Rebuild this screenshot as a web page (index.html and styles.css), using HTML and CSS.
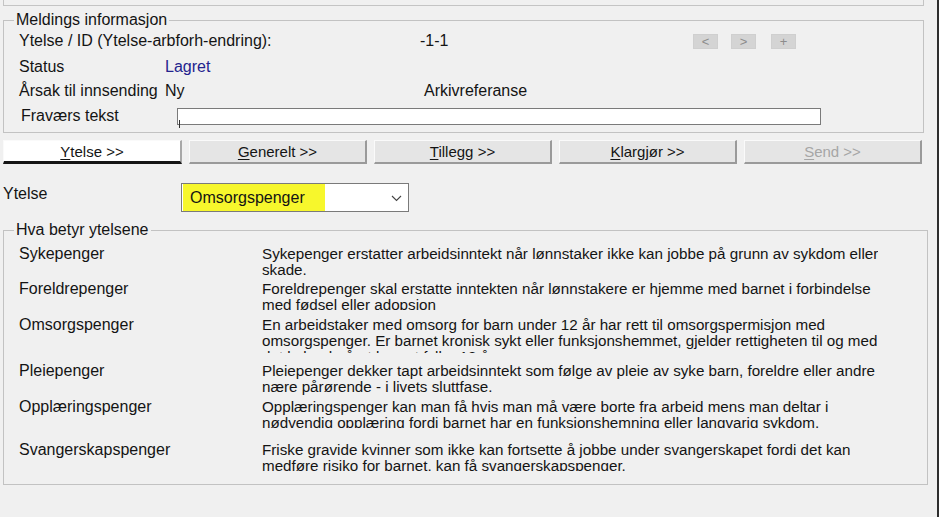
FILE: index.html
```html
<!DOCTYPE html>
<html lang="no">
<head>
<meta charset="utf-8">
<title>Ytelse</title>
<link rel="stylesheet" href="styles.css">
</head>
<body>
<div class="app">
  <div class="topbox"></div>

  <fieldset class="group info">
    <legend>Meldings informasjon</legend>
    <div class="irow r1">
      <span class="c-id">Ytelse / ID (Ytelse-arbforh-endring):</span>
      <span class="c-idval">-1-1</span>
      <span class="nav">
        <span class="navbtn">&lt;</span>
        <span class="navbtn nb2">&gt;</span>
        <span class="navbtn nb3">+</span>
      </span>
    </div>
    <div class="irow r2">
      <span class="c-lbl">Status</span>
      <span class="c-blue">Lagret</span>
    </div>
    <div class="irow">
      <span class="c-lbl">Årsak til innsending</span>
      <span class="c-ny">Ny</span>
      <span>Arkivreferanse</span>
    </div>
    <div class="irow r4">
      <span class="c-lbl2">Fraværs tekst</span>
      <span class="textbox"></span>
    </div>
  </fieldset>

  <div class="tabs">
    <div class="tab active"><u>Y</u>telse &gt;&gt;</div>
    <div class="tab"><u>G</u>enerelt &gt;&gt;</div>
    <div class="tab"><u>T</u>illegg &gt;&gt;</div>
    <div class="tab"><u>K</u>largjør &gt;&gt;</div>
    <div class="tab disabled"><u>S</u>end &gt;&gt;</div>
  </div>

  <div class="selrow">
    <span class="sellbl">Ytelse</span>
    <div class="select">
      <span class="hl">Omsorgspenger</span>
      <svg class="chev" width="11" height="7" viewBox="0 0 11 7"><polyline points="1,1 5.5,5.5 10,1" fill="none" stroke="#444" stroke-width="1.1"/></svg>
    </div>
  </div>

  <fieldset class="group expl">
    <legend>Hva betyr ytelsene</legend>
    <div class="item i1">
      <span class="name">Sykepenger</span>
      <div class="desc">Sykepenger erstatter arbeidsinntekt når lønnstaker ikke kan jobbe på grunn av sykdom eller<br>skade.</div>
    </div>
    <div class="item i2">
      <span class="name">Foreldrepenger</span>
      <div class="desc clip">Foreldrepenger skal erstatte inntekten når lønnstakere er hjemme med barnet i forbindelse<br>med fødsel eller adopsjon</div>
    </div>
    <div class="item i3">
      <span class="name">Omsorgspenger</span>
      <div class="desc cut3">En arbeidstaker med omsorg for barn under 12 år har rett til omsorgspermisjon med<br>omsorgspenger. Er barnet kronisk sykt eller funksjonshemmet, gjelder rettigheten til og med<br>det kalenderåret barnet fyller 18 år.</div>
    </div>
    <div class="item i4">
      <span class="name">Pleiepenger</span>
      <div class="desc">Pleiepenger dekker tapt arbeidsinntekt som følge av pleie av syke barn, foreldre eller andre<br>nære pårørende - i livets sluttfase.</div>
    </div>
    <div class="item i5">
      <span class="name">Opplæringspenger</span>
      <div class="desc clip">Opplæringspenger kan man få hvis man må være borte fra arbeid mens man deltar i<br>nødvendig opplæring fordi barnet har en funksjonshemning eller langvarig sykdom.</div>
    </div>
    <div class="item i6">
      <span class="name">Svangerskapspenger</span>
      <div class="desc clip">Friske gravide kvinner som ikke kan fortsette å jobbe under svangerskapet fordi det kan<br>medføre risiko for barnet, kan få svangerskapspenger.</div>
    </div>
  </fieldset>
</div>
</body>
</html>
```
FILE: styles.css
```css
* { box-sizing: border-box; }
html, body { margin: 0; padding: 0; background: #ffffff; }
body {
  font-family: "Liberation Sans", Arial, sans-serif;
  font-size: 16px;
  color: #141414;
}
.app {
  width: 939px;
  height: 517px;
  background: #f0f0f0;
  border-right: 2px solid #2e2e2e;
  padding-left: 3px;
  overflow: hidden;
}
.topbox {
  width: 921px;
  height: 6px;
  border: 1px solid #c4c4c4;
  border-top: 0;
}
.group {
  margin: 0;
  padding: 0 0 0 15px;
  border: 1px solid #c2c2c2;
  min-width: 0;
}
.group legend {
  padding: 0 2px;
  margin-left: -5px;
  line-height: 16px;
}
.info {
  width: 921px;
  margin-top: 6px;
  padding-top: 1px;
  padding-bottom: 4px;
}
.irow {
  display: flex;
  align-items: center;
  height: 24px;
  white-space: nowrap;
}
.irow.r2 { margin-top: 2px; }
.irow.r4 { margin-top: 1px; }
.c-id { width: 401px; }
.c-idval { width: 273px; }
.nav { display: flex; }
.navbtn {
  width: 25px;
  height: 15px;
  background: #d4d4d4;
  border: 1px solid #cfcfcf;
  color: #8c8c8c;
  font-size: 13px;
  line-height: 13px;
  text-align: center;
}
.nb2 { margin-left: 13px; }
.nb3 { margin-left: 15px; }
.c-lbl { width: 146px; }
.c-blue { color: #23238e; }
.c-ny { width: 259px; }
.c-lbl2 { width: 156px; margin-left: 2px; }
.textbox {
  position: relative;
  width: 644px;
  height: 17px;
  background: #ffffff;
  border: 1px solid #7a7a7a;
}
.textbox::after {
  content: "";
  position: absolute;
  left: 1px;
  top: 11px;
  width: 1px;
  height: 8px;
  background: #333;
}
.tabs {
  display: flex;
  gap: 7px;
  margin-top: 7px;
  width: 919px;
  font-size: 15px;
}
.tab {
  width: 178px;
  height: 24px;
  line-height: 21px;
  text-align: center;
  background: #e5e5e5;
  border-top: 1px solid #fafafa;
  border-left: 1px solid #fafafa;
  border-right: 2px solid #9a9a9a;
  border-bottom: 2px solid #9a9a9a;
}
.tab.active {
  width: 179px;
  background: #ffffff;
  border-bottom: 3px solid #151515;
  border-right: 2px solid #a8a8a8;
}
.tab.disabled { color: #a6a6a6; }
.tab u { text-underline-offset: 2px; }
.selrow {
  display: flex;
  margin-top: 19px;
  height: 28px;
}
.sellbl {
  width: 178px;
  padding-top: 2px;
}
.select {
  display: flex;
  align-items: center;
  justify-content: space-between;
  width: 228px;
  height: 29px;
  background: #ffffff;
  border: 1px solid #7a7a7a;
  padding: 0 6px 0 1px;
}
.hl {
  background: #f7f72c;
  padding: 5px 20px 5px 7px;
  line-height: 17px;
}
.chev { margin-top: 2px; }
.expl {
  width: 925px;
  margin-top: 11px;
  padding-top: 8px;
  padding-bottom: 13px;
}
.item {
  display: flex;
  white-space: nowrap;
  line-height: 16px;
}
.name { width: 243px; }
.desc {
  height: 32px;
  overflow: hidden;
  font-size: 15.2px;
}
.desc.clip { height: 29px; }
.desc.cut3 { height: 36px; }
.i1 { height: 35px; }
.i2 { height: 36px; }
.i3 { height: 46px; }
.i4 { height: 36px; }
.i5 { height: 43px; }
.i6 { height: 29px; }
```
